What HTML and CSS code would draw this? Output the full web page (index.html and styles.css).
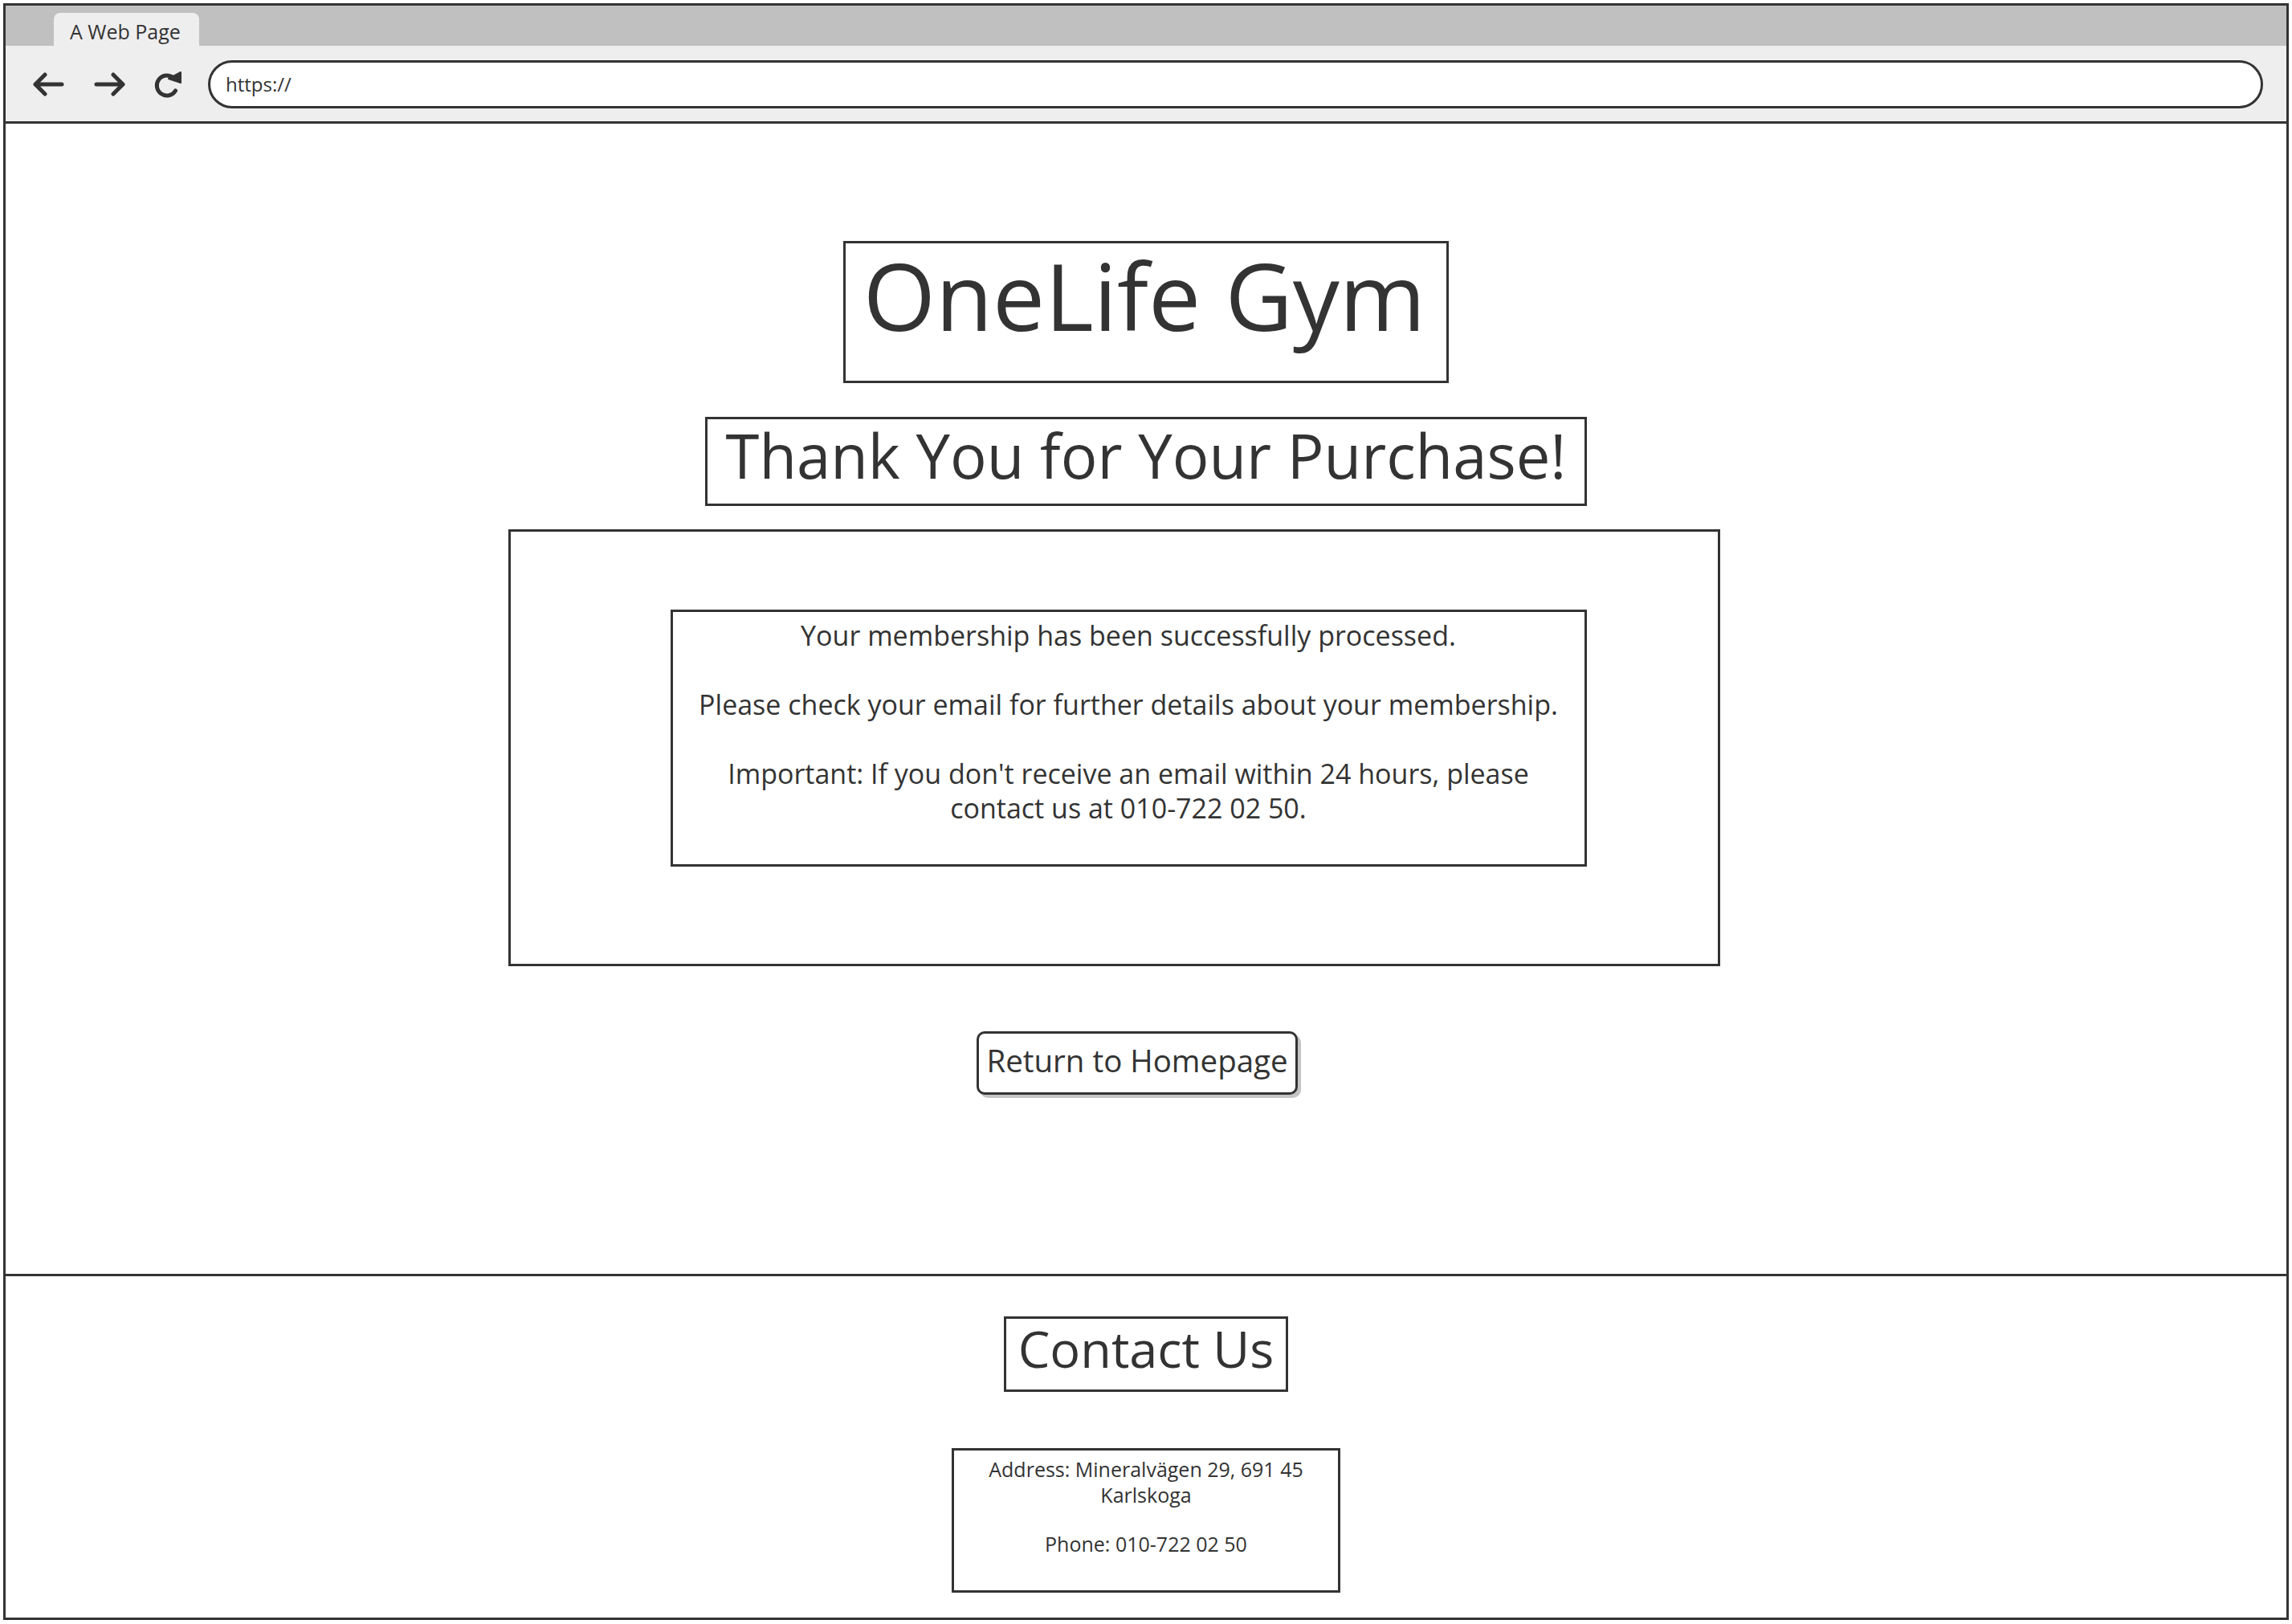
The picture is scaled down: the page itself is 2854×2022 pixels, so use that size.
FILE: index.html
```html
<!DOCTYPE html>
<html lang="en">
<head>
<meta charset="utf-8">
<title>A Web Page</title>
<link rel="stylesheet" href="styles.css">
</head>
<body>
<div class="window">
  <div class="tabbar">
    <div class="tab">A Web Page</div>
  </div>
  <div class="toolbar">
    <svg class="nav-icon" width="40" height="30" viewBox="0 0 40 30">
      <path d="M37 15 H4 M16 3 L4 15 L16 27" fill="none" stroke="#333" stroke-width="5" stroke-linecap="round" stroke-linejoin="round"/>
    </svg>
    <svg class="nav-icon fwd" width="40" height="30" viewBox="0 0 40 30">
      <path d="M3 15 H36 M24 3 L36 15 L24 27" fill="none" stroke="#333" stroke-width="5" stroke-linecap="round" stroke-linejoin="round"/>
    </svg>
    <svg class="nav-icon reload" width="37" height="35" viewBox="0 0 37 35">
      <path d="M26 9 A12.5 12.5 0 1 0 28.5 25" fill="none" stroke="#333" stroke-width="5" stroke-linecap="round"/>
      <polygon points="20,10 35,2 35,15" fill="#333" stroke="#333" stroke-width="2" stroke-linejoin="round"/>
    </svg>
    <div class="url">https://</div>
  </div>
  <main class="content">
    <h1 class="title">OneLife Gym</h1>
    <h2 class="thanks">Thank You for Your Purchase!</h2>
    <section class="outer">
      <div class="message">
        <p>Your membership has been successfully processed.</p>
        <p>Please check your email for further details about your membership.</p>
        <p>Important: If you don't receive an email within 24 hours, please contact us at 010-722 02 50.</p>
      </div>
    </section>
    <button class="home-btn" type="button">Return to Homepage</button>
  </main>
  <footer class="footer">
    <h2 class="contact-title">Contact Us</h2>
    <div class="address">
      <p>Address: Mineralvägen 29, 691 45 Karlskoga</p>
      <p>Phone: 010-722 02 50</p>
    </div>
  </footer>
</div>
</body>
</html>
```
FILE: styles.css
```css
* {
  box-sizing: border-box;
}

html, body {
  margin: 0;
  background: #ffffff;
}

body {
  padding: 4px;
  font-family: "Open Sans", "Liberation Sans", sans-serif;
  color: #333333;
}

.window {
  height: 2013px;
  border: 3px solid #333333;
  display: flex;
  flex-direction: column;
  overflow: hidden;
}

.tabbar {
  height: 50px;
  background: #c0c0c0;
  padding: 9px 0 0 60px;
  flex: none;
}

.tab {
  width: 181px;
  height: 41px;
  background: #eeeeee;
  border-radius: 8px 8px 0 0;
  font-size: 25px;
  line-height: 38px;
  padding: 4px 0 0 20px;
  white-space: nowrap;
}

.toolbar {
  height: 97px;
  background: #eeeeee;
  border-bottom: 3px solid #333333;
  display: flex;
  align-items: center;
  padding: 2px 29px 0 33px;
  flex: none;
}

.nav-icon {
  flex: none;
  display: block;
}

.fwd {
  margin-left: 37px;
}

.reload {
  margin-left: 33px;
}

.url {
  flex: 1;
  height: 60px;
  margin-left: 32px;
  border: 3px solid #333333;
  border-radius: 30px;
  background: #ffffff;
  font-size: 24px;
  line-height: 54px;
  padding-left: 19px;
}

.content {
  flex: 1;
  display: flex;
  flex-direction: column;
  align-items: center;
  padding-top: 146px;
}

.title {
  margin: 0;
  font-size: 116px;
  font-weight: 400;
  line-height: 129px;
  padding: 0 26px 42px 22px;
  border: 3px solid #333333;
  white-space: nowrap;
}

.thanks {
  margin: 42px 0 0;
  font-size: 76px;
  font-weight: 400;
  line-height: 89px;
  padding: 0 23px 16px;
  border: 3px solid #333333;
  white-space: nowrap;
}

.outer {
  margin: 29px 80px 0 0;
  width: 1509px;
  height: 544px;
  border: 3px solid #333333;
  padding: 97px 0 0 199px;
}

.message {
  width: 1141px;
  height: 320px;
  border: 3px solid #333333;
  padding: 8px 16px 0;
  text-align: center;
  font-size: 34px;
  line-height: 43px;
}

.message p {
  margin: 0;
}

.message p + p {
  margin-top: 43px;
}

.home-btn {
  margin: 81px 22px 0 0;
  font-family: "Open Sans", "Liberation Sans", sans-serif;
  font-size: 38.5px;
  line-height: 52px;
  color: #333333;
  background: #ffffff;
  padding: 7px 9px 14px;
  border: 3px solid #333333;
  border-radius: 10px;
  box-shadow: 4px 4px 0 #c4c4c4;
  white-space: nowrap;
}

.footer {
  height: 428px;
  flex: none;
  border-top: 3px solid #333333;
  display: flex;
  flex-direction: column;
  align-items: center;
  padding-top: 50px;
}

.contact-title {
  margin: 0;
  font-size: 63px;
  font-weight: 400;
  line-height: 73px;
  padding: 0 15px 15px;
  border: 3px solid #333333;
  white-space: nowrap;
}

.address {
  margin-top: 70px;
  width: 484px;
  border: 3px solid #333333;
  padding: 7px 20px 42px;
  text-align: center;
  font-size: 25px;
  line-height: 32px;
}

.address p {
  margin: 0;
}

.address p + p {
  margin-top: 29px;
}
```
